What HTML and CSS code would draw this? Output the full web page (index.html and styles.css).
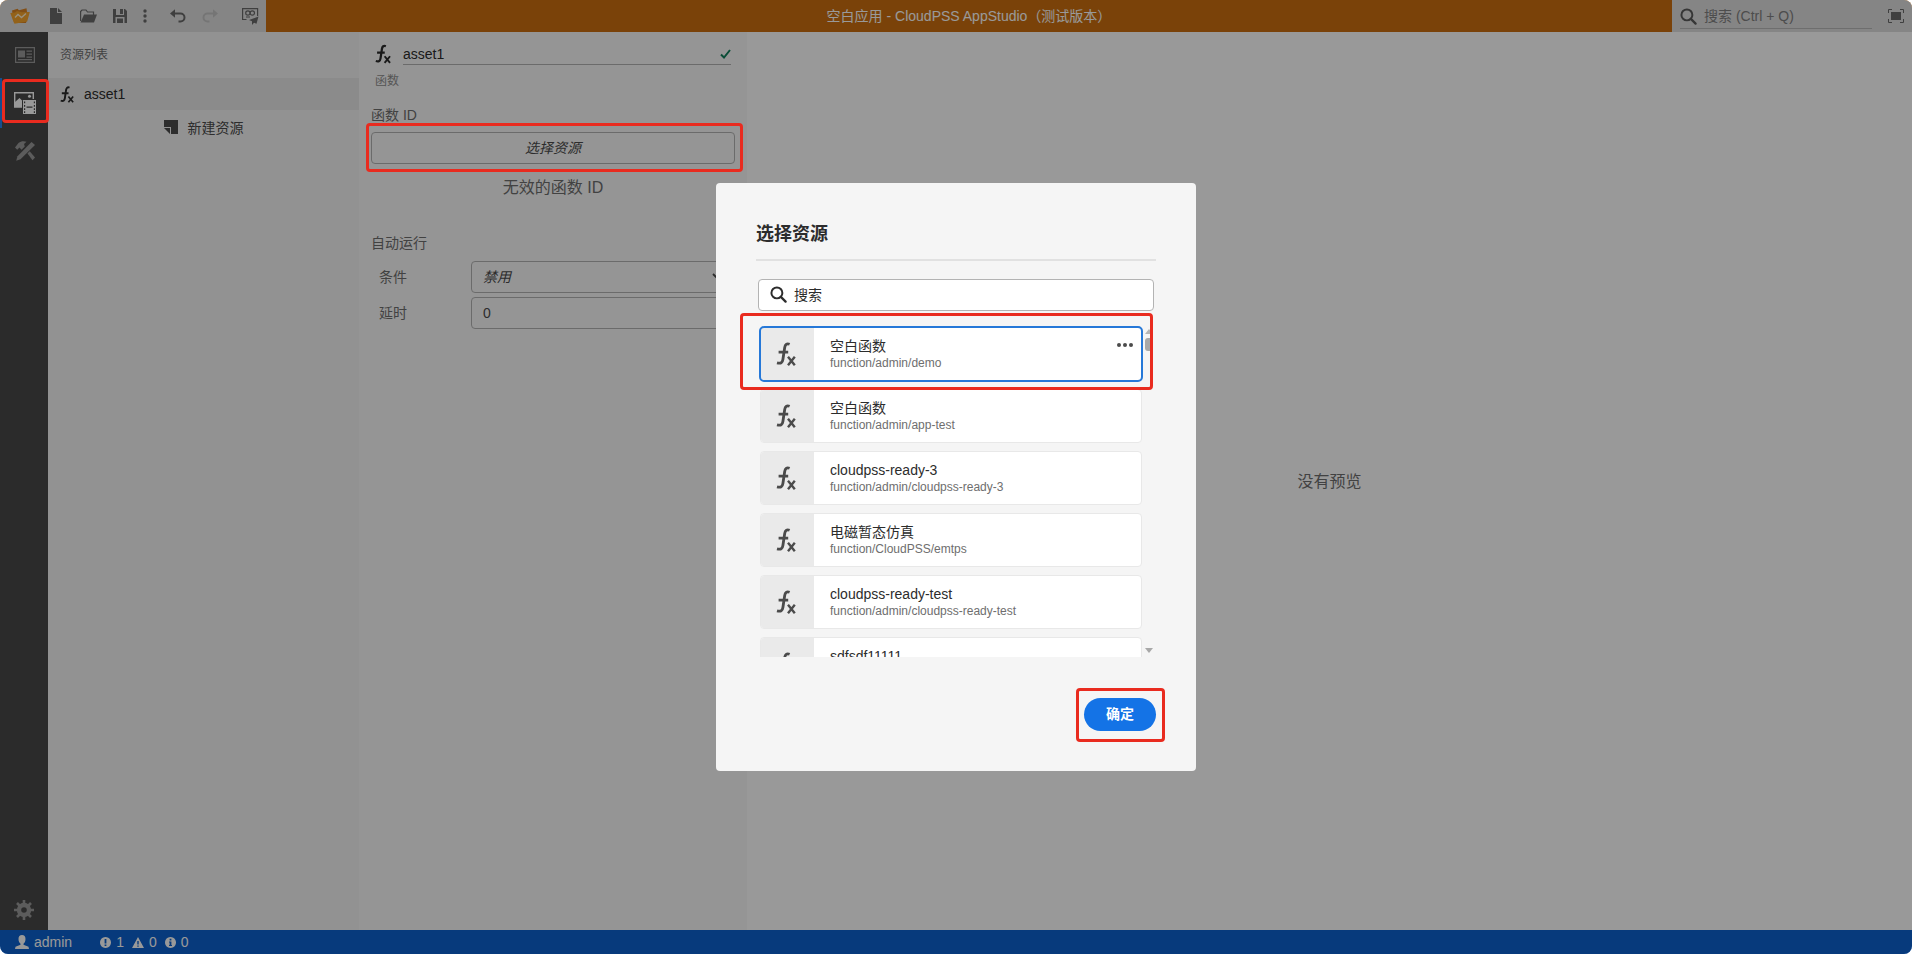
FILE: index.html
```html
<!DOCTYPE html>
<html lang="zh-CN">
<head>
<meta charset="utf-8">
<title>空白应用 - CloudPSS AppStudio</title>
<link rel="stylesheet" href="styles.css">
</head>
<body>
<svg class="defs" aria-hidden="true">
  <symbol id="fx" viewBox="0 0 20 24">
    <path d="M13.600 2.200C10.700 1 9.200 2.600 8.700 5.500L6.900 17.500c-.5 3.200-2 4.400-5.900 3.300M2.600 10.200h9.600" fill="none" stroke="currentColor" stroke-width="2.800"/>
    <path d="M12 14.800l6.800 8.400M18.800 14.800L12 23.200" fill="none" stroke="currentColor" stroke-width="2.400"/>
  </symbol>
  <symbol id="search" viewBox="0 0 18 18">
    <circle cx="7.3" cy="7.3" r="5.8" fill="none" stroke="currentColor" stroke-width="2.1"/>
    <path d="M11.5 11.5l5 5" stroke="currentColor" stroke-width="2.4" stroke-linecap="round"/>
  </symbol>
</svg>
<div class="app">
  <header class="topbar">
    <div class="toolbar">
      <button class="tool logo" aria-label="主页"><svg width="20" height="16" viewBox="0 0 20 16"><path d="M2 2.500L7.500.8 9 2.300l7.500-2L17 4l2 .5-3 10.500H4z" fill="#d98324"/><path d="M.3 5l4.700-.6L7 3l5 1.200L19.800 4l-2.600 9.500L4.500 15.800 2.800 12z" fill="#f5a32c"/><path d="M5 9.500l3-3 3.500 3L16 5.500" fill="none" stroke="#fff0d0" stroke-width="1.400"/></svg></button>
      <button class="tool" aria-label="新建"><svg width="12" height="16" viewBox="0 0 12 16"><path d="M0 0h7v5h5v11H0zM8 0l4 4H8z"/></svg></button>
      <button class="tool" aria-label="打开"><svg width="17" height="14" viewBox="0 0 17 14"><path d="M.6 12V2.500L2 1h4l1.500 2H13.500v3" fill="none" stroke="currentColor" stroke-width="1.200"/><path d="M4 5.500h13L14 13.500H.5z"/></svg></button>
      <button class="tool" aria-label="保存"><svg width="14" height="14" viewBox="0 0 14 14"><path fill-rule="evenodd" d="M0 0h3v6h8V0h1l2 2v12H0zM2.500 8v6h9V8z"/><path d="M7 0h3v5H7zM4 9.500h6V14H4z"/></svg></button>
      <button class="tool tool-more" aria-label="更多"><svg width="4" height="14" viewBox="0 0 4 14"><circle cx="2" cy="2" r="1.700"/><circle cx="2" cy="7" r="1.700"/><circle cx="2" cy="12" r="1.700"/></svg></button>
      <button class="tool tool-group" aria-label="撤销"><svg width="16" height="14" viewBox="0 0 16 14"><path d="M0 4.500L5 .2v8.600z"/><path d="M4 4.500h6.500a4 4 0 0 1 0 8H8.500" fill="none" stroke="currentColor" stroke-width="2"/></svg></button>
      <button class="tool faint" aria-label="重做" disabled><svg width="16" height="14" viewBox="0 0 16 14"><path d="M16 4.500L11 .2v8.600z"/><path d="M12 4.500H5.500a4 4 0 0 0 0 8H7.500" fill="none" stroke="currentColor" stroke-width="2"/></svg></button>
      <button class="tool tool-group" aria-label="运行"><svg width="17" height="17" viewBox="0 0 17 17"><path d="M4.500 11.500H.6V.7h15V8M4 9h4" fill="none" stroke="currentColor" stroke-width="1.200"/><circle cx="5.900" cy="5" r="2.200" fill="none" stroke="currentColor" stroke-width="1.200"/><circle cx="10.300" cy="5" r="2.200" fill="none" stroke="currentColor" stroke-width="1.200"/><path d="M16.500 8.500L7 12l3 1.300V17l2-2.300 2.500 1z"/></svg></button>
    </div>
    <h1 class="app-title">空白应用 - CloudPSS AppStudio（测试版本）</h1>
    <div class="top-search">
      <label class="quick"><svg width="17" height="17"><use href="#search"/></svg><input type="text" aria-label="搜索" placeholder="搜索 (Ctrl + Q)"></label>
      <button class="tool" aria-label="全屏"><svg width="16" height="14" viewBox="0 0 16 14"><path d="M.5 4V.5H4M12 .5h3.500V4M15.500 10v3.500H12M4 13.500H.5V10" fill="none" stroke="currentColor"/><path d="M3 3h10v8H3z"/></svg></button>
    </div>
  </header>

  <div class="body">
    <nav class="rail" aria-label="导航">
      <button class="rail-item" aria-label="页面"><svg width="20" height="16" viewBox="0 0 20 16"><path fill-rule="evenodd" d="M0 0h20v16H0zM1.200 1.200v13.600h17.600V1.200z"/><path d="M3 3.500h7v7H3zM11.500 3.500H17v1.300h-5.500zM11.500 6.500H17v1.300h-5.500zM11.500 9.500H17v1.300h-5.500zM3 12h14v1.200H3z"/></svg></button>
      <div class="rail-cell">
        <button class="rail-item active" aria-label="资源"><svg width="22" height="22" viewBox="0 0 22 22"><path d="M8 15H.7V.8h18.600V7" fill="none" stroke="currentColor" stroke-width="1.400"/><path d="M1 15v-5l4.500-4L8 8.500V15z"/><circle cx="15.500" cy="4.300" r="1.500"/><path fill-rule="evenodd" d="M9 8h13v14H9zM10 9.500v1.700h1.200V9.500zM10 13v1.700h1.200V13zM10 16.300V18h1.200v-1.700zM10 19.300V21h1.200v-1.700zM19.800 9.500v1.700H21V9.500zM19.800 13v1.700H21V13zM19.800 16.300V18H21v-1.700zM19.800 19.300V21H21v-1.700zM12.500 14.500v1.200h6v-1.200z"/></svg></button>
        <span class="mark mark-rail"></span>
      </div>
      <button class="rail-item" aria-label="工具"><svg width="20" height="20" viewBox="0 0 20 20"><path d="M0 6.500l3.500-4.500C6 0 9 0 11.500.8L9 3l.8 2.500L6.500 8.800 4.500 6.500 2.200 8.800z"/><path d="M12.500 12.500l2.200-2.200L20 16.500l-2.500 2.800z"/><path d="M1.200 19.800l1.300-4.600L16.500 1 20 4 5.500 18.300z"/></svg></button>
      <button class="rail-item settings" aria-label="设置"><svg width="20" height="20" viewBox="0 0 20 20"><circle cx="10" cy="10" r="5" fill="none" stroke="currentColor" stroke-width="4.400"/><path d="M10 0v4M10 16v4M0 10h4M16 10h4M3 3l3 3M14 14l3 3M17 3l-3 3M6 14l-3 3" stroke="currentColor" stroke-width="2.600"/></svg></button>
    </nav>

    <aside class="assets">
      <h2 class="assets-title">资源列表</h2>
      <button class="asset-row"><svg width="14" height="17"><use href="#fx"/></svg>asset1</button>
      <button class="asset-new"><svg width="14" height="14" viewBox="0 0 14 14"><path d="M0 0h14v14H7V7H0z"/><path d="M0 8h6v6z"/></svg>新建资源</button>
    </aside>

    <section class="props">
      <div class="name-row">
        <svg width="16" height="20"><use href="#fx"/></svg>
        <label class="name-field"><input type="text" aria-label="名称" value="asset1"><svg width="11" height="10" viewBox="0 0 11 10"><path d="M1 5.500L4 8.500 10 1" fill="none" stroke="#12805c" stroke-width="2"/></svg></label>
      </div>
      <p class="kind">函数</p>
      <h3 class="group-title">函数 ID</h3>
      <div class="pick">
        <button class="pick-button">选择资源</button>
        <span class="mark mark-pick"></span>
      </div>
      <p class="invalid">无效的函数 ID</p>
      <h3 class="group-title">自动运行</h3>
      <div class="field"><label for="cond">条件</label><div class="select-wrap"><select id="cond"><option>禁用</option></select><svg width="10" height="6" viewBox="0 0 10 6"><path d="M1 1l4 4 4-4" fill="none" stroke="currentColor" stroke-width="1.800"/></svg></div></div>
      <div class="field"><label for="delay">延时</label><input id="delay" type="text" value="0"></div>
    </section>

    <main class="preview">没有预览</main>
  </div>

  <footer class="status">
    <span class="stat user"><svg width="14" height="14" viewBox="0 0 14 14"><path d="M7 0c2.300 0 3.500 1.600 3.500 4S9.500 8 8.500 8.800v1l5 2 .5 2.200H0l.5-2.200 5-2v-1C4.500 8 3.500 6.400 3.500 4S4.700 0 7 0z"/></svg>admin</span>
    <span class="stat"><svg width="11" height="11" viewBox="0 0 11 11"><path fill-rule="evenodd" d="M5.500 0a5.500 5.500 0 1 0 .01 0zM4.600 2h1.800v4.500H4.600zM4.600 7.500h1.800v1.600H4.600z"/></svg>1</span>
    <span class="stat"><svg width="12" height="11" viewBox="0 0 12 11"><path fill-rule="evenodd" d="M6 0l6 11H0zM5.300 4v3.500h1.400V4zM5.300 8.500v1.300h1.400V8.500z"/></svg>0</span>
    <span class="stat"><svg width="11" height="11" viewBox="0 0 11 11"><path fill-rule="evenodd" d="M5.500 0a5.500 5.500 0 1 0 .01 0zM4.600 1.800h1.800v1.600H4.600zM4 4.500h2.400V8H7v1H4V8h.6V5.500H4z"/></svg>0</span>
  </footer>

  <div class="overlay">
    <div class="dialog" role="dialog" aria-labelledby="dlg-title">
      <h2 class="dialog-title" id="dlg-title">选择资源</h2>
      <div class="dialog-body">
        <label class="search-box"><svg width="17" height="17"><use href="#search"/></svg><input type="text" aria-label="搜索" placeholder="搜索"></label>
        <div class="results">
          <ul class="cards">
            <li class="card selected"><span class="thumb"><svg width="20" height="24"><use href="#fx"/></svg></span><div class="info"><b>空白函数</b><small>function/admin/demo</small></div><button class="card-more" aria-label="更多"><svg width="16" height="4" viewBox="0 0 16 4"><circle cx="2" cy="2" r="2"/><circle cx="8" cy="2" r="2"/><circle cx="14" cy="2" r="2"/></svg></button></li>
            <li class="card"><span class="thumb"><svg width="20" height="24"><use href="#fx"/></svg></span><div class="info"><b>空白函数</b><small>function/admin/app-test</small></div></li>
            <li class="card"><span class="thumb"><svg width="20" height="24"><use href="#fx"/></svg></span><div class="info"><b>cloudpss-ready-3</b><small>function/admin/cloudpss-ready-3</small></div></li>
            <li class="card"><span class="thumb"><svg width="20" height="24"><use href="#fx"/></svg></span><div class="info"><b>电磁暂态仿真</b><small>function/CloudPSS/emtps</small></div></li>
            <li class="card"><span class="thumb"><svg width="20" height="24"><use href="#fx"/></svg></span><div class="info"><b>cloudpss-ready-test</b><small>function/admin/cloudpss-ready-test</small></div></li>
            <li class="card"><span class="thumb"><svg width="20" height="24"><use href="#fx"/></svg></span><div class="info"><b>sdfsdf11111</b></div></li>
          </ul>
          <div class="scroll" aria-hidden="true"><i class="up"></i><i class="knob"></i><i class="down"></i></div>
          <span class="mark mark-card"></span>
        </div>
      </div>
      <div class="dialog-actions">
        <div class="confirm-wrap"><button class="confirm">确定</button><span class="mark mark-confirm"></span></div>
      </div>
    </div>
  </div>
</div>
</body>
</html>
```

FILE: styles.css
```css
* { box-sizing: border-box; }
body { margin: 0; background: #fff; }
body, button, input, select {
  font-family: "Liberation Sans", "Noto Sans CJK SC", sans-serif;
  font-size: 14px;
  color: #2c2c2c;
}
button, input, select { margin: 0; padding: 0; border: 0; background: none; outline: 0; }
h1, h2, h3, p, ul { margin: 0; padding: 0; font-weight: 400; list-style: none; }
svg { display: block; flex: none; fill: currentColor; }
.defs { position: absolute; width: 0; height: 0; }

.app {
  position: relative;
  display: flex;
  flex-direction: column;
  height: 100vh;
  border-radius: 8px;
  overflow: hidden;
}

/* top bar */
.topbar { display: flex; height: 32px; background: #cb6f10; }
.toolbar { display: flex; background: #dedede; }
.tool { display: flex; align-items: center; justify-content: center; width: 32px; color: #6a6a6a; }
.tool.logo { width: 40px; }
.tool-more { width: 18px; }
.tool-group { margin-left: 8px; }
.tool.faint { color: #c4c4c4; }
.app-title { flex: 1; font-size: 14px; line-height: 32px; text-align: center; color: #fff; }
.top-search { display: flex; width: 240px; padding-left: 8px; background: #dedede; justify-content: space-between; }
.top-search .tool { width: 40px; padding-left: 8px; }
.quick { display: flex; align-items: center; gap: 7px; width: 192px; height: 29px; border-bottom: 1px solid #b8b8b8; color: #5a5a5a; }
.quick svg { margin-top: 4px; }
.quick input { flex: 1; min-width: 0; padding-top: 4px; }
.quick input::placeholder { color: #808080; opacity: 1; }

/* main body */
.body { flex: 1; min-height: 0; display: flex; background: #fff; }
.rail { display: flex; flex-direction: column; width: 48px; background: #494949; }
.rail-item { display: flex; align-items: center; justify-content: center; width: 48px; height: 46px; padding-left: 2px; color: #9a9a9a; }
.rail-cell { position: relative; }
.rail-item.active { height: 50px; border-left: 2px solid #2680eb; padding-left: 0; color: #fff; }
.rail-item.settings { margin-top: auto; height: 40px; padding: 0; }

.assets { display: flex; flex-direction: column; width: 311px; background: #f4f4f4; }
.assets-title { padding: 1px 12px 0; font-size: 12px; line-height: 45px; color: #6e6e6e; }
.asset-row { display: flex; align-items: center; gap: 10px; height: 32px; padding: 0 12px; background: #e8e8e8; }
.asset-new { display: flex; align-items: center; justify-content: center; gap: 10px; height: 34px; color: #4b4b4b; }

.props { width: 388px; padding: 8px 12px; background: #f9f9f9; }
.name-row { display: flex; align-items: center; gap: 12px; padding: 0 4px; height: 28px; }
.name-field { flex: 1; display: flex; align-items: center; height: 22px; border-bottom: 1px solid #b3b3b3; }
.name-field input { flex: 1; min-width: 0; }
.kind { padding: 2px 4px; font-size: 12px; line-height: 22px; color: #8e8e8e; }
.group-title { font-size: 14px; line-height: 20px; color: #6e6e6e; }
.kind + .group-title { padding-top: 11px; }
.pick { position: relative; margin-top: 7px; }
.pick-button { width: 100%; height: 32px; padding-bottom: 2px; border: 1px solid #b3b3b3; border-radius: 4px; font-style: italic; color: #4b4b4b; }
.invalid { font-size: 16px; line-height: 24px; padding: 12px 0 32px; text-align: center; color: #6e6e6e; }
.invalid + .group-title { margin-bottom: 7px; line-height: 22px; }
.field { display: flex; align-items: center; height: 32px; margin-bottom: 4px; padding-left: 8px; }
.field label { width: 92px; padding-bottom: 3px; color: #6e6e6e; }
.field select, .field input { flex: 1; min-width: 0; width: 100%; height: 32px; padding: 0 11px 1px; border: 1px solid #b3b3b3; border-radius: 4px; color: #4b4b4b; }
.field select { appearance: none; font-style: italic; }
.select-wrap { position: relative; flex: 1; }
.select-wrap svg { position: absolute; right: 13px; top: 12px; color: #4b4b4b; }

.preview { flex: 1; display: flex; align-items: center; justify-content: center; padding-bottom: 3px; font-size: 16px; color: #6e6e6e; }

/* status bar */
.status { display: flex; align-items: center; gap: 8px; height: 24px; padding: 0 15px; background: #0d62cf; color: #fff; }
.stat { display: flex; align-items: center; gap: 5px; }
.stat.user { margin-right: 20px; }

/* dialog */
.overlay { position: absolute; inset: 0; z-index: 5; display: flex; align-items: center; justify-content: center; background: rgba(0, 0, 0, .4); }
.dialog { width: 480px; padding: 40px; border-radius: 4px; background: #f5f5f5; }
.dialog-title { padding-bottom: 14px; border-bottom: 2px solid #e1e1e1; font-size: 18px; font-weight: 700; line-height: 22px; }
.dialog-body { padding: 18px 2px 0; }
.search-box { display: flex; align-items: center; gap: 7px; height: 32px; padding: 0 11px 1px; border: 1px solid #b3b3b3; border-radius: 4px; background: #fff; }
.search-box input { flex: 1; min-width: 0; }
.search-box input::placeholder { color: #2c2c2c; opacity: 1; }
.results { position: relative; display: flex; height: 346px; }
.cards { flex: 1; display: flex; flex-direction: column; gap: 8px; padding: 16px 2px 0; overflow: hidden; }
.card { display: flex; flex: none; height: 54px; border: 1px solid #e8e8e8; border-radius: 4px; background: #fff; }
.card.selected { outline: 2px solid #2678d8; outline-offset: -1px; }
.thumb { display: flex; align-items: center; justify-content: center; width: 53px; padding-right: 3px; border-radius: 3px 0 0 3px; background: #eaeaea; color: #4b4b4b; }
.info { flex: 1; padding: 9px 16px; }
.info b, .info small { display: block; font-weight: 400; }
.info b { font-size: 14px; line-height: 18px; }
.info small { font-size: 12px; line-height: 16px; color: #6e6e6e; }
.card-more { align-self: flex-start; padding: 15px 8px; color: #4b4b4b; }
.scroll { display: flex; flex-direction: column; align-items: center; width: 10px; padding: 18px 0 4px; }
.up, .down { border: 4px solid transparent; }
.up { border-top: 0; border-bottom: 5px solid #b5b5b5; }
.down { margin-top: auto; border-bottom: 0; border-top: 5px solid #a8a8a8; }
.knob { width: 8px; height: 13px; margin-top: 4px; border-radius: 3px; background: #a8a8a8; }
.dialog-actions { display: flex; justify-content: flex-end; padding-top: 41px; }
.confirm-wrap { position: relative; }
.confirm { width: 72px; height: 33px; padding-bottom: 3px; border-radius: 17px; background: #1473e6; color: #fff; font-weight: 700; }

/* highlight frames */
.mark { position: absolute; z-index: 10; border: 3px solid #e92b1f; border-radius: 4px; pointer-events: none; }
.mark-rail { inset: 1px -1px 5px 2px; }
.mark-pick { inset: -9px -8px -8px -5px; }
.mark-card { top: 2px; left: -18px; right: 1px; height: 77px; }
.mark-confirm { inset: -10px -9px -11px -8px; }
```
